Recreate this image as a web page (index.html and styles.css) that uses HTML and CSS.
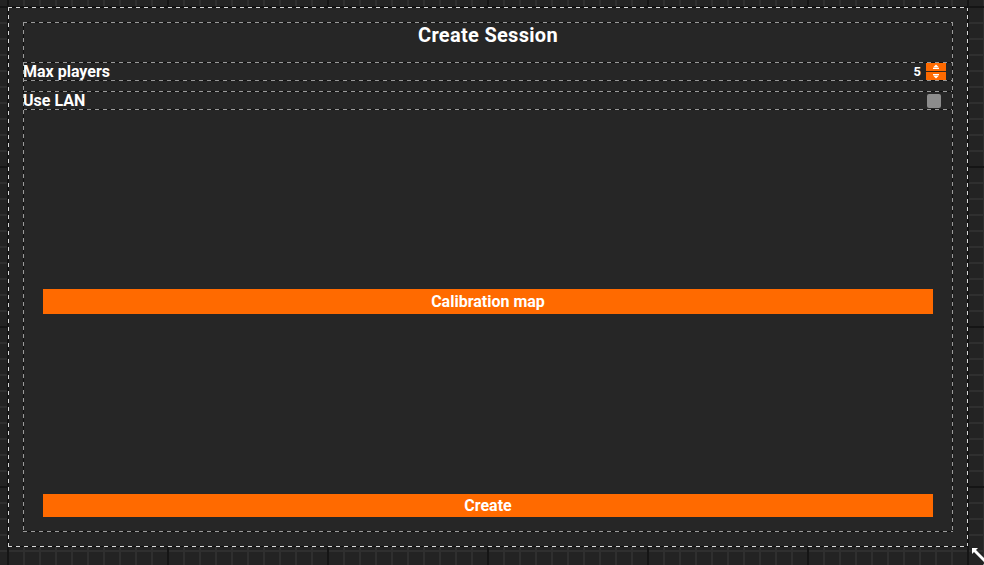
FILE: index.html
```html
<!DOCTYPE html>
<html>
<head>
<meta charset="utf-8">
<link rel="stylesheet" href="styles.css">
</head>
<body>
<div class="canvas">
  <div class="outer dash dash-light">
    <div class="inner dash">
      <div class="title">Create Session</div>
      <div class="row dash">
        <span class="label">Max players</span>
        <div class="spin-wrap">
          <span class="num">5</span>
          <div class="spinner">
            <div class="spin-btn"><svg width="20" height="8" viewBox="0 0 20 8"><polygon points="10,1.5 7,4.5 13,4.5" fill="#fff"/><rect x="7" y="5" width="6" height="1" fill="#fff"/></svg></div>
            <div class="spin-btn"><svg width="20" height="8" viewBox="0 0 20 8"><rect x="7" y="2" width="6" height="1" fill="#fff"/><polygon points="7,3.5 13,3.5 10,6.5" fill="#fff"/></svg></div>
          </div>
        </div>
      </div>
      <div class="row row2 dash">
        <span class="label">Use LAN</span>
        <span class="checkbox"></span>
      </div>
      <div class="content">
        <div class="btn btn-cal">Calibration map</div>
        <div class="btn btn-create">Create</div>
      </div>
    </div>
  </div>
  <svg class="resize" width="20" height="20" viewBox="0 0 20 20">
    <path d="M2 1 L8 1 L6 3 L17 14 L19 12 L19 18 L13 18 L15 16 L4 5 L2 7 Z" fill="#fff"/>
  </svg>
</div>
</body>
</html>
```
FILE: styles.css
```css
* { box-sizing: border-box; }
html, body { margin: 0; padding: 0; }
body {
  width: 984px;
  height: 565px;
  overflow: hidden;
  font-family: Roboto, "Liberation Sans", sans-serif;
  font-weight: bold;
  color: #fff;
  background-color: #232323;
  background-image:
    linear-gradient(90deg, #151515 2px, transparent 2px),
    linear-gradient(180deg, #151515 2px, transparent 2px),
    linear-gradient(90deg, #2f2f2f 2px, transparent 2px),
    linear-gradient(180deg, #2f2f2f 2px, transparent 2px);
  background-size: 160px 160px, 160px 160px, 16px 16px, 16px 16px;
  background-position: 7px 6px, 7px 6px, 7px 6px, 7px 6px;
}
.canvas {
  position: relative;
  width: 984px;
  height: 565px;
  padding: 7px 0 0 8px;
}
.dash { position: relative; }
.dash::after {
  content: "";
  position: absolute;
  inset: 0;
  pointer-events: none;
  --dc: #9a9a9a;
  background:
    repeating-linear-gradient(90deg, var(--dc) 0 4px, #111 4px 8px) left top / 100% 1px no-repeat,
    repeating-linear-gradient(90deg, var(--dc) 0 4px, #111 4px 8px) left bottom / 100% 1px no-repeat,
    repeating-linear-gradient(180deg, var(--dc) 0 4px, #111 4px 8px) left top / 1px 100% no-repeat,
    repeating-linear-gradient(180deg, var(--dc) 0 4px, #111 4px 8px) right top / 1px 100% no-repeat;
}
.dash-light::after { --dc: #d8d8d8; }
.outer {
  width: 960px;
  height: 540px;
  background: #262626;
  padding: 15px;
}
.inner {
  height: 100%;
  display: flex;
  flex-direction: column;
}
.title {
  height: 40px;
  padding-top: 1px;
  font-size: 20px;
  line-height: 24px;
  letter-spacing: 0.3px;
  text-align: center;
}
.row {
  height: 19px;
  display: flex;
  align-items: center;
  justify-content: space-between;
}
.row2 { margin-top: 10px; }
.label {
  font-size: 16px;
  line-height: 17px;
  margin-bottom: 1px;
}
.spin-wrap {
  display: flex;
  align-items: center;
  gap: 5px;
  margin-right: 7px;
}
.num {
  font-size: 13px;
  line-height: 15px;
}
.spinner {
  display: flex;
  flex-direction: column;
  gap: 1px;
  width: 20px;
  background: #3a2a1e;
}
.spin-btn {
  height: 8px;
  background: #ff6a00;
  display: flex;
}
.checkbox {
  width: 14px;
  height: 14px;
  background: #8c8c8c;
  border-radius: 2px;
  margin-right: 12px;
}
.content {
  flex: 1;
  display: flex;
  flex-direction: column;
  padding: 0 20px 15px;
}
.btn {
  background: #ff6a00;
  text-align: center;
  font-size: 16px;
}
.btn-cal {
  height: 25px;
  line-height: 25px;
  margin: auto 0;
  position: relative;
  top: -1px;
}
.btn-create {
  height: 23px;
  line-height: 23px;
}
.resize {
  position: absolute;
  left: 970px;
  top: 547px;
}
```
